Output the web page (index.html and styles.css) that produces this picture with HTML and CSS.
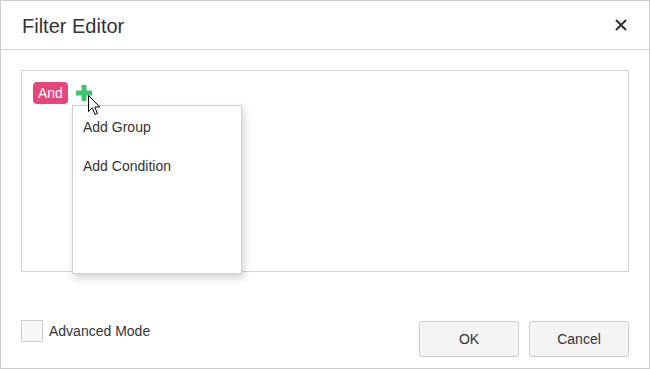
FILE: index.html
```html
<!DOCTYPE html>
<html lang="en">
<head>
  <meta charset="UTF-8">
  <title>Filter Editor</title>
  <link rel="stylesheet" href="styles.css">
</head>
<body>
  <div class="dialog">
    <div class="header">
      <span class="title">Filter Editor</span>
      <button class="close" aria-label="Close">
        <svg width="12" height="12" viewBox="0 0 12 12">
          <path d="M1 1 L11 11 M11 1 L1 11" stroke="#333" stroke-width="2" fill="none"/>
        </svg>
      </button>
    </div>

    <div class="body">
      <div class="filter-box">
        <div class="group-row">
          <span class="badge">And</span>
          <span class="add">
            <svg width="16" height="16" viewBox="0 0 16 16">
              <rect x="5.5" y="0" width="5" height="16" fill="#3ec46d"/>
              <rect x="0" y="5.5" width="16" height="5" fill="#3ec46d"/>
            </svg>
          </span>
        </div>

        <div class="menu">
          <div class="menu-item">Add Group</div>
          <div class="menu-item">Add Condition</div>
        </div>

        <svg class="pointer" width="13" height="21" viewBox="0 0 13 21">
          <path d="M0.5 0.5 L0.5 16.5 L4.3 12.9 L7 19.5 L9.4 18.5 L6.8 12 L11.8 12 Z" fill="#fff" stroke="#000" stroke-width="1" stroke-linejoin="miter"/>
        </svg>
      </div>
    </div>

    <div class="footer">
      <label class="check">
        <span class="check-box"></span>
        <span>Advanced Mode</span>
      </label>
      <div class="buttons">
        <button class="btn">OK</button>
        <button class="btn">Cancel</button>
      </div>
    </div>
  </div>
</body>
</html>
```

FILE: styles.css
```css
* {
  box-sizing: border-box;
}
body {
  margin: 0;
  font-family: "Liberation Sans", Arial, sans-serif;
  color: #333;
  background: #fff;
}
.dialog {
  width: 650px;
  height: 369px;
  border: 1px solid #cdcdcd;
  background: #fff;
  display: flex;
  flex-direction: column;
}
.header {
  height: 49px;
  border-bottom: 1px solid #d6d6d6;
  display: flex;
  align-items: center;
  justify-content: space-between;
  padding: 3px 22px 0 21px;
}
.title {
  font-size: 20px;
  line-height: 23px;
  color: #333;
}
.close {
  border: none;
  background: none;
  padding: 0;
  width: 12px;
  height: 12px;
  margin-top: -3px;
  display: flex;
}
.body {
  padding: 20px 20px 0 20px;
}
.filter-box {
  position: relative;
  height: 202px;
  border: 1px solid #d4d4d4;
  padding: 11px;
}
.group-row {
  display: flex;
  align-items: center;
  gap: 8px;
}
.badge {
  height: 22px;
  line-height: 22px;
  padding: 0 5px;
  border-radius: 4px;
  background: #e8457b;
  color: #fff;
  font-size: 14px;
}
.add {
  display: flex;
  width: 16px;
  height: 16px;
}
.menu {
  position: absolute;
  left: 50px;
  top: 34px;
  width: 170px;
  height: 169px;
  background: #fff;
  border: 1px solid #d0d0d0;
  box-shadow: 2px 4px 8px rgba(0, 0, 0, 0.18);
  padding: 2px 0 0 10px;
}
.menu-item {
  height: 39px;
  line-height: 39px;
  font-size: 14px;
  color: #333;
}
.pointer {
  position: absolute;
  left: 66px;
  top: 24px;
  z-index: 2;
}
.footer {
  display: flex;
  justify-content: space-between;
  align-items: flex-start;
  padding: 0 20px;
  margin-top: 48px;
}
.check {
  display: flex;
  align-items: center;
  gap: 6px;
  font-size: 14px;
  line-height: 22px;
  color: #333;
}
.check-box {
  width: 22px;
  height: 22px;
  border: 1px solid #cfcfcf;
  background: #f7f7f7;
  border-radius: 1px;
}
.buttons {
  display: flex;
  gap: 10px;
  margin-top: 1px;
}
.btn {
  width: 100px;
  height: 36px;
  border: 1px solid #cccccc;
  border-radius: 3px;
  background: #f4f4f4;
  font-family: "Liberation Sans", Arial, sans-serif;
  font-size: 14px;
  color: #333;
  padding: 0;
}
```
